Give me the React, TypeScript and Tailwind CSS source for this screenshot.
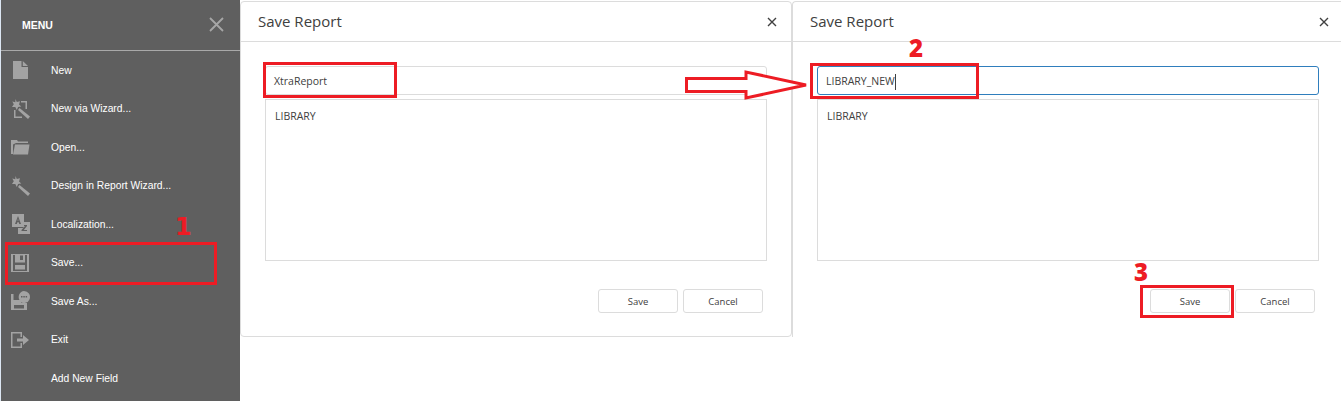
const menu = [
  { label: "New", icon: "new" },
  { label: "New via Wizard...", icon: "wizard" },
  { label: "Open...", icon: "open" },
  { label: "Design in Report Wizard...", icon: "wand" },
  { label: "Localization...", icon: "local" },
  { label: "Save...", icon: "save" },
  { label: "Save As...", icon: "saveas" },
  { label: "Exit", icon: "exit" },
  { label: "Add New Field", icon: "" },
];

function MenuIcon({ name }: { name: string }) {
  if (!name) return <span className="w-[20px]" />;
  return (
    <svg width="20" height="20" viewBox="1 0 20 20" fill="#a3a3a3">
      {name === "new" && <path d="M3 1h8.500v6H18v12H3z M12.800 1 18 6h-5.200z" />}
      {name === "wizard" && (
        <>
          <path d="M5.500 0l1.300 3L10 2.300 9 5.400l2.300 2.200-3.200.3L6.800 11 5.300 7.900 2 8l1.800-2.800L2.300 2.500l3 .7z" />
          <path d="M11 2h6v8h-1.500V3.500H11zM4 11h1.500v6.500H12V19H4z" />
          <path d="M9.500 9 20 17.500 18 20 8 11z" />
        </>
      )}
      {name === "open" && (
        <>
          <path d="M1 3h6l1 1.500h10V6H6L3 7.500V17H1z" />
          <path d="M5 7.500h14.500L18 17.500H3z" />
        </>
      )}
      {name === "wand" && (
        <>
          <path d="M5.500 0l1.300 3L10 2.300 9 5.400l2.300 2.200-3.200.3L6.800 11 5.300 7.900 2 8l1.800-2.800L2.300 2.500l3 .7z" />
          <path d="M9.500 9 20 17.500 18 20 8 11z" />
        </>
      )}
      {name === "local" && (
        <>
          <path fillRule="evenodd" d="M2 0h12v13H2zM8 2 5 10h1.800l.6-1.800h1.300L9.300 10H11zM8 4.500l.4 2.200H7.600z" />
          <path fillRule="evenodd" d="M11 8h9v12H8v-6h6zM11.500 11v1H15l-3.500 4v1H17v-1h-3.200l3.200-4v-1z" />
        </>
      )}
      {name === "save" && (
        <path fillRule="evenodd" d="M1 1h18v18H1zM3 2h2v7.500h10V2h2v16H3zM10 2.500V7h3V2.500zM5 12v4.500h10V12z" />
      )}
      {name === "saveas" && (
        <>
          <path fillRule="evenodd" d="M1 3h2.500v6H11v3h6v7H1zM4 14v3.500h10V14z" />
          <path fillRule="evenodd" d="M14 0a6 6 0 1 1-4 10.500L9 12l.5-3A6 6 0 0 1 14 0zM11 5h1.500v1.500H11zM13.300 5h1.500v1.500h-1.500zM15.600 5h1.500v1.500h-1.500z" />
        </>
      )}
      {name === "exit" && (
        <>
          <path d="M1 2h11v5h-1.500V3.500h-8v13h8V13H12v5H1z" />
          <path d="M7 8.500h6V5l6 5-6 5v-3.500H7z" />
        </>
      )}
    </svg>
  );
}

function Sidebar() {
  return (
    <aside className="flex h-[401px] w-[239px] shrink-0 flex-col bg-[#5f5f5f] font-['Liberation_Sans',sans-serif] text-white">
      <div className="flex h-[51px] shrink-0 items-center justify-between border-b border-[#a9a9a9] pl-[21px] pr-[16px]">
        <span className="pt-px text-[10.500px] font-bold">MENU</span>
        <svg width="15" height="15" viewBox="0 0 15 15" stroke="#a6a6a6" strokeWidth="1.800" className="-mt-[2px]">
          <path d="M1 1l13 13M14 1 1 14" />
        </svg>
      </div>
      {menu.map((item) => (
        <div key={item.label} className="flex h-[38.500px] items-center gap-[20px] pl-[10px] text-[10.300px]">
          <MenuIcon name={item.icon} />
          <span>{item.label}</span>
        </div>
      ))}
    </aside>
  );
}

function Dialog({ value, focused, compact }: { value: string; focused?: boolean; compact?: boolean }) {
  return (
    <section
      className={
        compact
          ? "flex h-[336px] w-[549px] shrink-0 flex-col rounded-tl-[4px] border-t border-l border-[#dcdcdc] bg-white"
          : "flex h-[336px] w-[552px] shrink-0 flex-col rounded-[4px] border border-[#dcdcdc] bg-white"
      }
    >
      <header
        className={
          compact
            ? "flex h-[40px] shrink-0 items-center justify-between border-b border-[#dcdcdc] pl-[17px] pr-[12px] text-[#404040]"
            : "flex h-[40px] shrink-0 items-center justify-between border-b border-[#dcdcdc] pl-[17px] pr-[14px] text-[#404040]"
        }
      >
        <h2 className="text-[15px] leading-none">Save Report</h2>
        <svg width="10" height="10" viewBox="0 0 10 10" stroke="#404040" strokeWidth="1.400">
          <path d="M1 1l8 8M9 1 1 9" />
        </svg>
      </header>
      <div className="ml-[24px] mt-[24px] flex w-[502px] flex-col gap-[4px] text-[10.500px] text-[#404040]">
        {focused ? (
          <div className="flex h-[29px] items-center rounded-[3px] border border-[#2f7ebd] pl-[8px] pt-[2px]">
            <span>{value}</span>
            <span className="h-[16px] w-px bg-[#404040]" />
          </div>
        ) : (
          <div className="flex h-[29px] items-center rounded-[3px] border border-[#dcdcdc] pl-[8px] pt-[2px]">{value}</div>
        )}
        <div className="h-[162px] border border-[#dcdcdc] px-[9px] pt-[9px] leading-[15px]">LIBRARY</div>
      </div>
      <footer className="ml-[357px] mt-[28px] flex gap-[5px] text-[9.500px] text-[#404040]">
        <button className="h-[24px] w-[80px] rounded-[3px] border border-[#dcdcdc] pt-[2px]">Save</button>
        <button className="h-[24px] w-[80px] rounded-[3px] border border-[#dcdcdc] pt-[2px]">Cancel</button>
      </footer>
    </section>
  );
}

function Marker({ className }: { className: string }) {
  return <div className={`absolute border-[3px] border-[#ed1c24] ${className}`} />;
}

function Num({ children, className }: { children: string; className: string }) {
  return (
    <span className={`absolute text-[24px] font-extrabold leading-none text-[#ed1c24] ${className}`}>{children}</span>
  );
}

export default function App() {
  return (
    <div className="relative h-[406px] w-[1341px] overflow-hidden bg-white font-['Open_Sans',sans-serif]">
      <div className="flex items-start">
        <div className="h-[401px] w-px shrink-0 bg-[#dce6f2]" />
        <Sidebar />
        <div className="mt-px flex">
          <Dialog value="XtraReport" />
          <Dialog value="LIBRARY_NEW" focused compact />
        </div>
      </div>

      {/* annotations drawn on top of the screenshot */}
      <Marker className="left-[5px] top-[242px] h-[43px] w-[212px]" />
      <Marker className="left-[263px] top-[62px] h-[36px] w-[134px]" />
      <Marker className="left-[810px] top-[63px] h-[36px] w-[169px]" />
      <Marker className="left-[1140px] top-[285px] h-[33px] w-[94px]" />
      <Num className="left-[175px] top-[215px] font-['DejaVu_Sans',sans-serif]">1</Num>
      <Num className="left-[909px] top-[36px]">2</Num>
      <Num className="left-[1134px] top-[260px]">3</Num>
      <svg className="absolute left-[680px] top-[66px]" width="132" height="38" viewBox="0 0 132 38">
        <path d="M6.500 12.500H66V6L126 19 66 32v-6.500H6.500z" fill="white" stroke="#ed1c24" strokeWidth="3" />
      </svg>
    </div>
  );
}
